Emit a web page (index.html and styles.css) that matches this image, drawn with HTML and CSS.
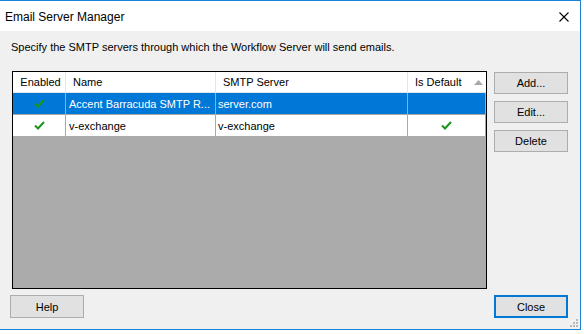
FILE: index.html
```html
<!DOCTYPE html>
<html lang="en">
<head>
    <meta charset="UTF-8">
    <title>Email Server Manager</title>
    <link rel="stylesheet" href="styles.css">
</head>
<body>
    <div class="window">
        <div class="titlebar">
            <span class="title">Email Server Manager</span>
            <svg class="close-x" width="10" height="10" viewBox="0 0 10 10">
                <path d="M0.5 0.5 L9.5 9.5 M9.5 0.5 L0.5 9.5" stroke="#000" stroke-width="1.1" fill="none"/>
            </svg>
        </div>

        <div class="content">
            <p class="intro">Specify the SMTP servers through which the Workflow Server will send emails.</p>

            <div class="main">
                <div class="listview">
                    <div class="lv-row lv-header">
                        <div class="cell center">Enabled</div>
                        <div class="cell">Name</div>
                        <div class="cell">SMTP Server</div>
                        <div class="cell sort">
                            <span>Is Default</span>
                            <svg width="9" height="5" viewBox="0 0 9 5"><path d="M0 5 L4.5 0 L9 5 Z" fill="#a9a9a9"/></svg>
                        </div>
                    </div>
                    <div class="lv-row selected">
                        <div class="cell center">
                            <svg class="check" width="11" height="9" viewBox="0 0 11 9"><path d="M1 4.5 L4 7.5 L10 1" stroke="#1a961a" stroke-width="2" fill="none"/></svg>
                        </div>
                        <div class="cell">Accent Barracuda SMTP R...</div>
                        <div class="cell tight">server.com</div>
                        <div class="cell"></div>
                    </div>
                    <div class="lv-row">
                        <div class="cell center">
                            <svg class="check" width="11" height="9" viewBox="0 0 11 9"><path d="M1 4.5 L4 7.5 L10 1" stroke="#1a961a" stroke-width="2" fill="none"/></svg>
                        </div>
                        <div class="cell">v-exchange</div>
                        <div class="cell tight">v-exchange</div>
                        <div class="cell center">
                            <svg class="check" width="11" height="9" viewBox="0 0 11 9"><path d="M1 4.5 L4 7.5 L10 1" stroke="#1a961a" stroke-width="2" fill="none"/></svg>
                        </div>
                    </div>
                    <div class="lv-empty"></div>
                </div>

                <div class="side-buttons">
                    <button class="btn">Add...</button>
                    <button class="btn">Edit...</button>
                    <button class="btn">Delete</button>
                </div>
            </div>

            <div class="footer">
                <button class="btn help">Help</button>
                <button class="btn default">Close</button>
            </div>
        </div>

        <svg class="grip" width="8" height="8" viewBox="0 0 8 8">
            <rect x="6" y="0" width="2" height="2" fill="#b9b9b9"/>
            <rect x="3" y="3" width="2" height="2" fill="#b9b9b9"/>
            <rect x="6" y="3" width="2" height="2" fill="#b9b9b9"/>
            <rect x="0" y="6" width="2" height="2" fill="#b9b9b9"/>
            <rect x="3" y="6" width="2" height="2" fill="#b9b9b9"/>
            <rect x="6" y="6" width="2" height="2" fill="#b9b9b9"/>
        </svg>
    </div>
</body>
</html>
```

FILE: styles.css
```css
* {
    margin: 0;
    padding: 0;
    box-sizing: border-box;
}

body {
    background: #fff;
    font-family: 'Liberation Sans', Arial, sans-serif;
    font-size: 11px;
    color: #000;
}

.window {
    position: relative;
    width: 581px;
    height: 330px;
    border: 1px solid #1883d7;
    border-left: none;
    background: #f0f0f0;
    display: flex;
    flex-direction: column;
}

.titlebar {
    height: 30px;
    background: #fff;
    display: flex;
    align-items: center;
    justify-content: space-between;
    padding: 1px 11px 0 5px;
}

.title {
    font-size: 12px;
}

.content {
    flex: 1;
    padding: 10px 12px 0 11px;
}

.intro {
    line-height: 13px;
    margin-bottom: 17px;
}

.main {
    display: flex;
    gap: 7px;
    margin-left: 1px;
}

/* list view */
.listview {
    width: 475px;
    height: 218px;
    border: 1px solid #000;
    background: #ababab;
    display: flex;
    flex-direction: column;
}

.lv-row {
    display: grid;
    grid-template-columns: 53px 150px 192px 78px;
    height: 22px;
    background: #fff;
    border-bottom: 1px solid #a9a9a9;
}

.lv-row .cell {
    display: flex;
    align-items: center;
    padding-left: 3px;
    border-right: 1px solid #a9a9a9;
    white-space: nowrap;
    overflow: hidden;
}

.lv-row .cell.tight {
    padding-left: 2px;
}

.lv-row .cell.center {
    justify-content: center;
    padding-left: 0;
}

.lv-header {
    height: 21px;
    border-bottom: 1px solid #e5e5e5;
}

.lv-header .cell {
    padding-left: 7px;
    border-right: 1px solid #e5e5e5;
}

.lv-header .cell.center {
    padding-left: 3px;
}

.lv-header .cell.sort {
    justify-content: space-between;
    padding-right: 3px;
    border-right: none;
}

.lv-row.selected {
    background: #0078d7;
    color: #fff;
}

.lv-empty {
    flex: 1;
}

/* buttons */
.btn {
    width: 74px;
    height: 22px;
    background: #e1e1e1;
    border: 1px solid #adadad;
    font-family: 'Liberation Sans', Arial, sans-serif;
    font-size: 11px;
    color: #000;
}

.side-buttons {
    display: flex;
    flex-direction: column;
    gap: 7px;
    margin-top: 1px;
}

.footer {
    display: flex;
    justify-content: space-between;
    margin-top: 6px;
}

.footer .btn {
    height: 23px;
}

.btn.help {
    margin-left: -1px;
}

.btn.default {
    border: 2px solid #0078d7;
}

.grip {
    position: absolute;
    right: 2px;
    bottom: 2px;
}
```
